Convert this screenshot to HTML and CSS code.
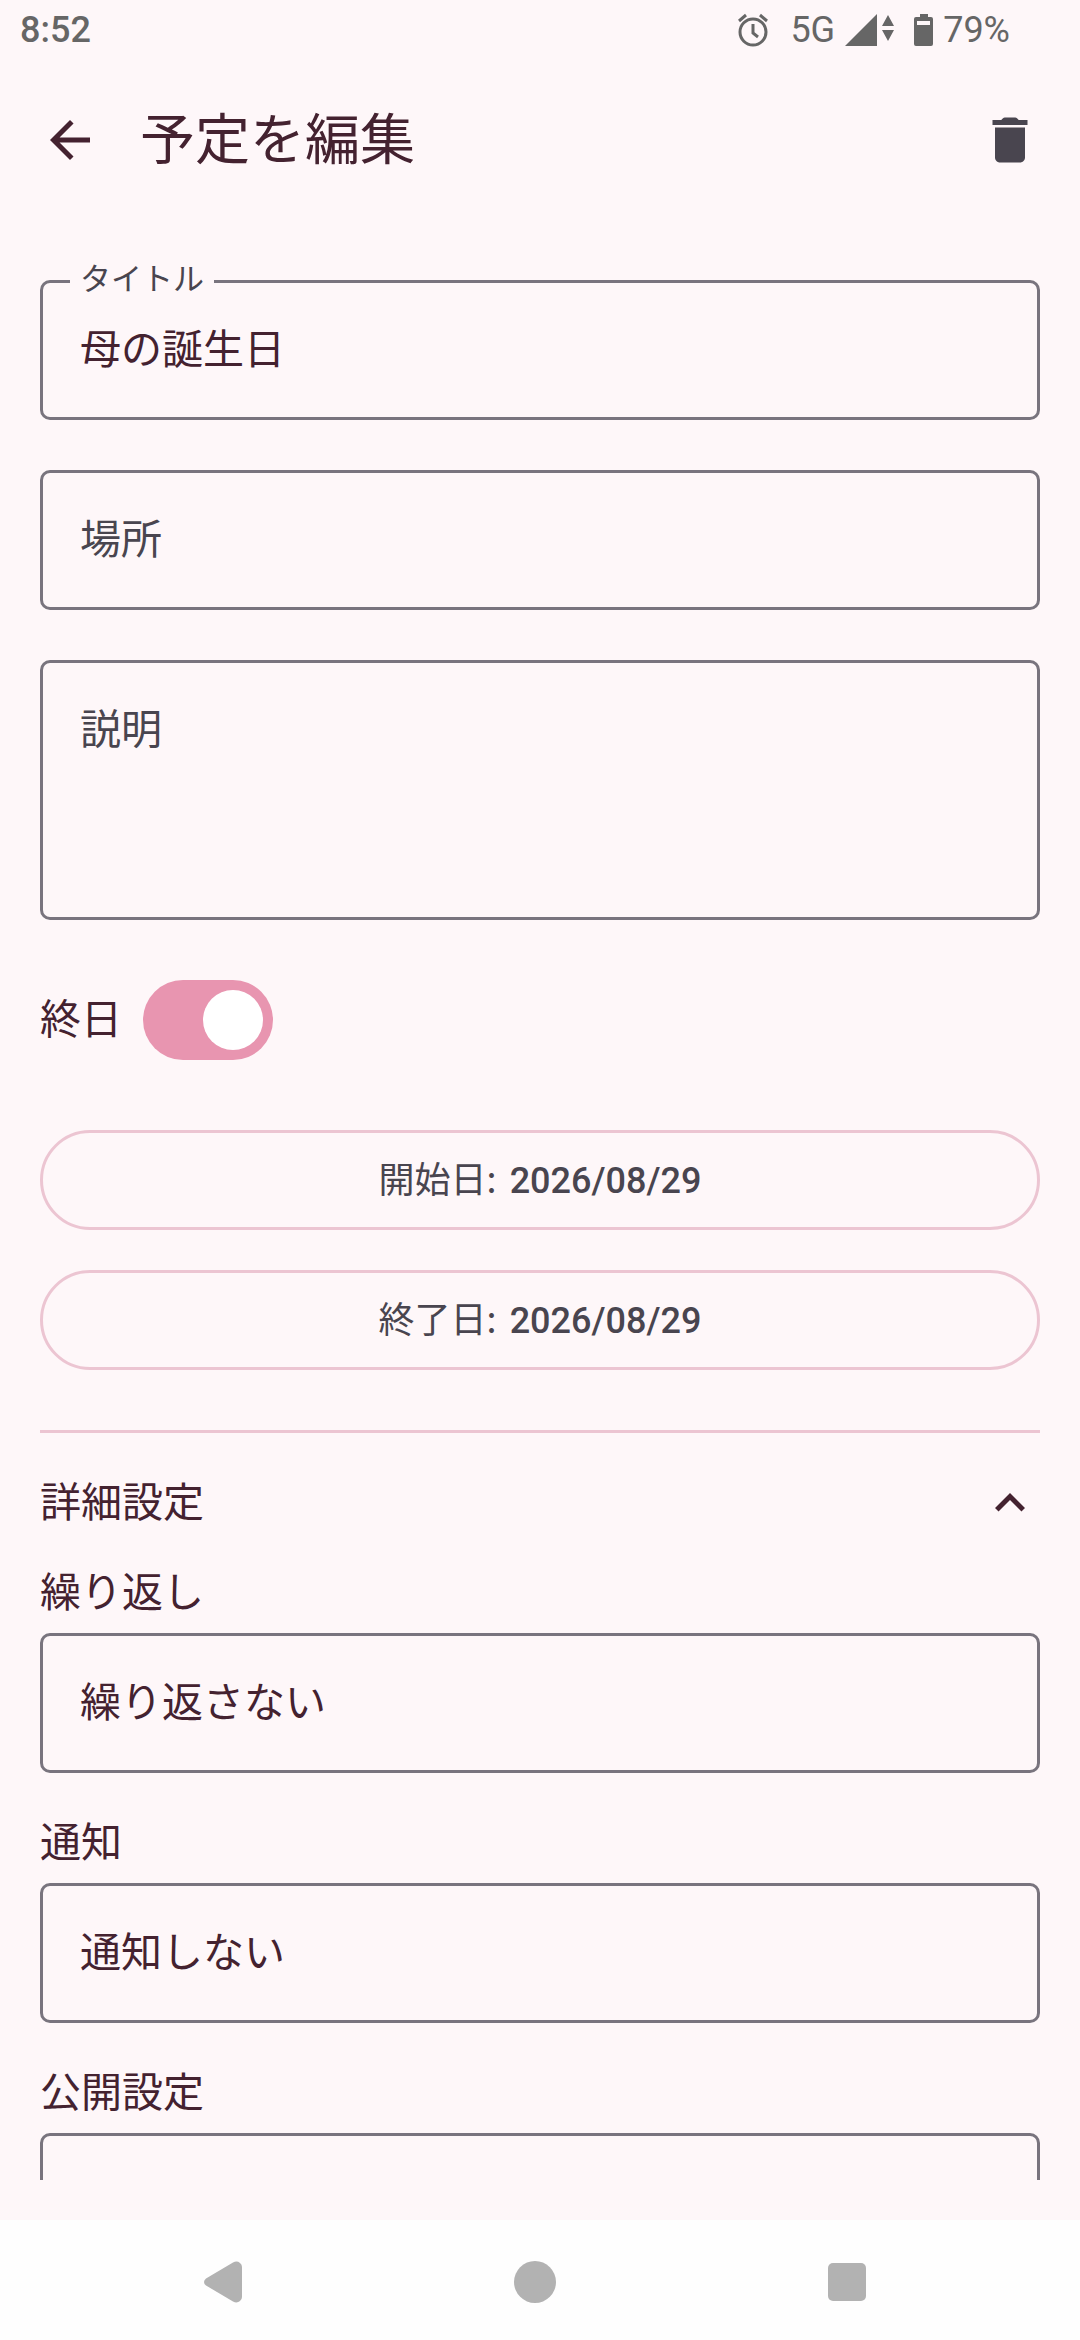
FILE: index.html
```html
<!DOCTYPE html>
<html lang="ja">
<head>
    <meta charset="UTF-8">
    <meta name="viewport" content="width=device-width, initial-scale=1">
    <title>予定を編集</title>
    <link rel="stylesheet" href="styles.css">
</head>
<body>
    <div class="status-bar">
        <span class="clock">8:52</span>
        <div class="status-icons">
            <svg class="alarm" width="32" height="34" viewBox="0 0 32 34" fill="none" stroke="currentColor" stroke-width="3">
                <circle cx="16" cy="19" r="13"/>
                <path d="M16 11v9l5 4M2 8l7-6M30 8l-7-6"/>
            </svg>
            <span class="network">5G</span>
            <svg class="signal" width="32" height="32" viewBox="0 0 32 32" fill="currentColor">
                <path d="M32 0v32H0z"/>
            </svg>
            <svg class="traffic" width="12" height="32" viewBox="0 0 12 32" fill="currentColor">
                <path d="M6 1l6 11H0zM6 27L0 16h12z"/>
            </svg>
            <svg class="battery" width="19" height="32" viewBox="0 0 19 32" fill="currentColor" fill-rule="evenodd">
                <path d="M6 0h8v3h3q2 0 2 2v25q0 2-2 2H2q-2 0-2-2V5q0-2 2-2h4zM3 7v4h13V7z"/>
            </svg>
            <span class="percent">79%</span>
        </div>
    </div>

    <header class="app-bar">
        <button class="icon-button" type="button" aria-label="戻る">
            <svg viewBox="0 0 24 24" fill="currentColor">
                <path d="M20 11H7.83l5.59-5.59L12 4l-8 8 8 8 1.41-1.41L7.83 13H20v-2z"/>
            </svg>
        </button>
        <h1>予定を編集</h1>
        <button class="icon-button delete" type="button" aria-label="削除">
            <svg viewBox="0 0 24 24" fill="currentColor">
                <path d="M6 19c0 1.1.9 2 2 2h8c1.1 0 2-.9 2-2V7H6v12zM19 4h-3.5l-.7-.7q-.3-.3-.7-.3H9.900q-.4 0-.7.3l-.7.7H5v2h14V4z"/>
            </svg>
        </button>
    </header>

    <main>
        <form>
            <fieldset class="outlined">
                <legend><label for="title">タイトル</label></legend>
                <input id="title" type="text" value="母の誕生日">
            </fieldset>
            <input class="box" type="text" placeholder="場所" aria-label="場所">
            <textarea class="box" placeholder="説明" aria-label="説明"></textarea>

            <div class="all-day">
                <label for="all-day">終日</label>
                <input class="switch" id="all-day" type="checkbox" role="switch" checked>
            </div>

            <div class="dates">
                <button class="date-button" type="button">開始日: <span class="date">2026/08/29</span></button>
                <button class="date-button" type="button">終了日: <span class="date">2026/08/29</span></button>
            </div>

            <hr>

            <button class="details-toggle" type="button" aria-expanded="true">
                <span>詳細設定</span>
                <svg viewBox="0 0 24 24" fill="currentColor">
                    <path d="M12 8l-6 6 1.410 1.410L12 10.830l4.590 4.580L18 14z"/>
                </svg>
            </button>

            <div class="setting">
                <label for="repeat">繰り返し</label>
                <select class="box" id="repeat">
                    <option>繰り返さない</option>
                </select>
            </div>
            <div class="setting">
                <label for="notice">通知</label>
                <select class="box" id="notice">
                    <option>通知しない</option>
                </select>
            </div>
            <div class="setting">
                <label for="visibility">公開設定</label>
                <select class="box" id="visibility">
                    <option></option>
                </select>
            </div>
        </form>
    </main>

    <nav class="nav-bar">
        <button type="button" aria-label="戻る">
            <svg width="38" height="42" viewBox="0 0 38 42" fill="currentColor">
                <path d="M29 1.500q4-2 7 .5 2 1.500 2 4v30q0 2.500-2 4-3 2.500-7 .5L2 24.500Q0 23 0 21t2-3.500z"/>
            </svg>
        </button>
        <button type="button" aria-label="ホーム">
            <svg width="42" height="42" viewBox="0 0 42 42" fill="currentColor">
                <circle cx="21" cy="21" r="21"/>
            </svg>
        </button>
        <button type="button" aria-label="履歴">
            <svg width="38" height="38" viewBox="0 0 38 38" fill="currentColor">
                <rect width="38" height="38" rx="5"/>
            </svg>
        </button>
    </nav>
</body>
</html>
```
FILE: styles.css
```css
* {
    box-sizing: border-box;
}
body {
    display: flex;
    flex-direction: column;
    height: 100vh;
    margin: 0;
    background: #fef7f9;
    color: #442230;
    font-family: Roboto, "Noto Sans CJK JP", sans-serif;
    font-size: 41px;
    line-height: 60px;
}
button,
input,
select,
textarea {
    margin: 0;
    padding: 0;
    border: 0;
    background: none;
    color: inherit;
    font: inherit;
}
svg {
    display: block;
}

/* Status bar */
.status-bar {
    display: flex;
    justify-content: space-between;
    height: 60px;
    padding: 0 70px 0 20px;
    color: #666;
    font-size: 36px;
}
.clock {
    font-weight: 500;
}
.status-icons {
    display: flex;
    align-items: center;
}
.network {
    margin: 0 10px 0 21px;
}
.traffic {
    margin: 0 20px 0 5px;
}
.percent {
    margin-left: 10px;
}

/* App bar */
.app-bar {
    display: flex;
    align-items: center;
    height: 160px;
    padding: 0 40px;
}
.app-bar h1 {
    flex: 1;
    margin: 0 40px;
    font-size: 55px;
    font-weight: 400;
    line-height: 70px;
}
.icon-button {
    width: 60px;
    height: 60px;
}
.delete {
    color: #49454f;
}

/* Form */
main {
    flex: 1;
    min-height: 0;
    margin-bottom: 40px;
    padding: 40px 40px 0;
    overflow-y: auto;
    scrollbar-width: none;
}
form {
    display: flex;
    flex-direction: column;
}
.outlined,
.box {
    width: 100%;
    border: 3px solid #79747e;
    border-radius: 10px;
}
.outlined {
    min-width: 0;
    margin: 0;
    padding: 0 27px;
}
.outlined legend {
    padding: 0 10px 3px;
    color: #49454f;
    font-size: 31px;
    line-height: 40px;
}
.outlined legend label {
    display: block;
}
.outlined input {
    display: block;
    width: 100%;
    height: 114px;
    padding: 0 10px 28px;
}
.box {
    display: block;
    height: 140px;
    margin-top: 50px;
    padding: 0 37px;
    appearance: none;
}
textarea.box {
    height: 260px;
    padding-top: 37px;
    resize: none;
}
.box::placeholder {
    color: #49454f;
    opacity: 1;
}
.all-day {
    display: flex;
    align-items: center;
    gap: 21px;
    margin-top: 60px;
}
.switch {
    width: 130px;
    height: 80px;
    padding: 10px;
    border-radius: 40px;
    background: #e895b0;
    appearance: none;
}
.switch::before {
    content: "";
    display: block;
    width: 60px;
    height: 60px;
    border-radius: 50%;
    background: #fff;
}
.switch:checked::before {
    margin-left: auto;
}
.dates {
    display: flex;
    flex-direction: column;
    gap: 40px;
    margin: 70px 0 60px;
}
.date-button {
    height: 100px;
    padding-bottom: 3px;
    border: 3px solid #ecc5d2;
    border-radius: 50px;
    color: #49454f;
    font-family: "Noto Sans CJK JP", sans-serif;
    font-size: 36px;
}
.date {
    margin-left: 5px;
    font-family: Roboto, sans-serif;
    font-weight: 500;
}
hr {
    width: 100%;
    height: 3px;
    margin: 0;
    border: 0;
    background: #ecc5d2;
}
.details-toggle {
    display: flex;
    align-items: center;
    justify-content: space-between;
    margin: 40px 0 30px;
}
.details-toggle svg {
    width: 60px;
    height: 60px;
}
.setting {
    margin-bottom: 40px;
}
.setting label {
    display: block;
}
.setting .box {
    margin-top: 10px;
}

/* System navigation */
.nav-bar {
    display: grid;
    grid-template-columns: repeat(3, 1fr);
    height: 120px;
    padding: 4px 77px 0 67px;
    background: #fefefe;
    color: #b2b2b2;
}
.nav-bar button {
    display: flex;
    align-items: center;
    justify-content: center;
}
```
